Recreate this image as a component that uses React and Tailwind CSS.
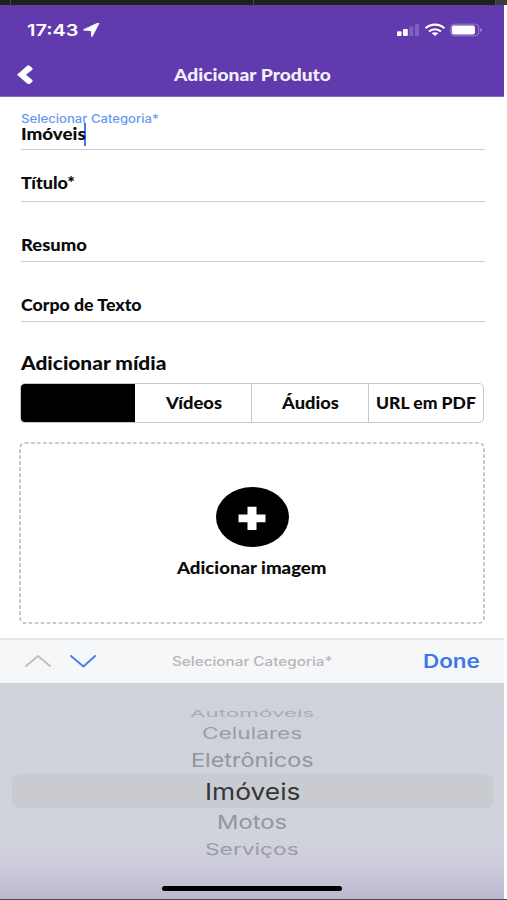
import { useLayoutEffect, useRef, useState } from "react";

// Text stretched horizontally so that it spans exactly `width` pixels.
function FitText({ width, className = "", children }) {
  const ref = useRef(null);
  const [scale, setScale] = useState(1);
  useLayoutEffect(() => {
    setScale(width / ref.current.offsetWidth);
  }, [width]);
  return (
    <span className={`flex shrink-0 whitespace-nowrap ${className}`} style={{ width }}>
      <span ref={ref} className="block shrink-0 origin-left" style={{ transform: `scaleX(${scale})` }}>
        {children}
      </span>
    </span>
  );
}

const display = "font-['Lato','Noto_Sans',sans-serif] font-black";
const system = "font-['Inter','Liberation_Sans',sans-serif]";

function StatusIcons() {
  return (
    <svg className="mt-[3px] h-4 w-[90px]" viewBox="0 0 90 16" fill="none">
      <g fill="#fff">
        <rect x="1" y="8.2" width="4.6" height="4.8" rx="1" />
        <rect x="7" y="6" width="4.800" height="7" rx="1" />
        <rect x="13.2" y="3.6" width="4" height="9.4" rx="1" opacity=".2" />
        <rect x="19" y="1.2" width="4" height="11.800" rx="1" opacity=".2" />
      </g>
      <g stroke="#fff" strokeWidth="2.2">
        <path d="M29.6 5.2C35 .4 43 .4 48.4 5.2" />
        <path d="M33 8.5c3.4-3 8.600-3 12 0" />
      </g>
      <path d="M35.700 10.300c1.800-1.500 4.800-1.500 6.600 0L39 13z" fill="#fff" />
      <rect x="54.700" y="1.200" width="28" height="11.600" rx="3.500" stroke="#fff" strokeOpacity=".35" />
      <rect x="55.800" y="2.500" width="23.200" height="9" rx="2" fill="#fff" />
      <path d="M84.200 5.200c2.200.5 2.200 3.100 0 3.600z" fill="#fff" fillOpacity=".45" />
    </svg>
  );
}

function Header() {
  return (
    <header className="h-[92px] shrink-0 border-b border-[#8568c4] bg-[#613bad] text-white">
      <div className="flex h-[48px] items-center justify-between pl-[27px] pr-[18px]">
        <div className="flex items-center gap-[5px] pt-[1px]">
          <FitText width={51} className={`${system} text-[16px] font-semibold leading-5`}>17:43</FitText>
          <svg className="h-[14px] w-[17px]" viewBox="0 0 17 14">
            <path d="M15.900.4 9.300 13.300q-.5.700-.8-.1L8.200 7.600 1 7.200q-1-.3 0-.8L14.900.1q1.200-.3 1 .3z" fill="#fff" stroke="#fff" strokeWidth=".8" />
          </svg>
        </div>
        <StatusIcons />
      </div>
      <div className="flex h-[43px] items-center pl-[17px]">
        <svg className="h-[20px] w-[17px]" viewBox="0 0 17 20">
          <path d="M0 9.700 10.500.6Q12 0 13 1l2.300 1.900q.9.900 0 1.800L9 9.700l6.300 5.200q.9 1 0 1.900L13 18.700q-1.200.8-2.500 0z" fill="#fff" />
        </svg>
        <FitText width={157} className={`${display} ml-[140px] text-[17px] leading-6 text-[#f3effa]`}>Adicionar Produto</FitText>
      </div>
    </header>
  );
}

function Field({ label, width, className }) {
  return (
    <div className={`flex items-end border-b border-[#cfcfcf] ${className}`}>
      <FitText width={width} className={`${display} text-[17px] leading-5`}>{label}</FitText>
    </div>
  );
}

function Form() {
  return (
    <main className="flex h-[541px] shrink-0 flex-col bg-white pl-[20.5px] pr-[19.5px] text-[#0b0b0b]">
      <div className="flex h-[53px] flex-col border-b border-[#cfcfcf] pt-[15px]">
        <FitText width={138} className={`${system} text-[11.500px] font-medium leading-[14px] text-[#6798ee]`}>Selecionar Categoria*</FitText>
        <div className="-mt-[3px] flex h-[23px] items-start">
          <FitText width={65} className={`${display} pt-[2px] text-[17px] leading-[18px]`}>Imóveis</FitText>
          <span className="-ml-[1.5px] h-[23px] w-[2px] bg-[#4475e0]" />
        </div>
      </div>
      <Field label="Título*" width={54} className="h-[52px] pb-[8px]" />
      <Field label="Resumo" width={66} className="h-[60px] pb-[6px]" />
      <Field label="Corpo de Texto" width={121} className="h-[60px] pb-[6px]" />
      <FitText width={145} className={`${display} mt-[29px] text-[19px] leading-6`}>Adicionar mídia</FitText>
      <div className={`${display} -ml-[0.5px] mr-[0.5px] mt-[8px] flex h-[40px] shrink-0 overflow-hidden rounded-[5px] border border-[#c9c9c9] text-[17px] leading-5`}>
        <div className="w-[114px] bg-black" />
        <div className="flex flex-1 items-center justify-center border-r border-[#c9c9c9] pl-[2px]"><FitText width={56}>Vídeos</FitText></div>
        <div className="flex flex-1 items-center justify-center border-r border-[#c9c9c9] pl-[1px]"><FitText width={57}>Áudios</FitText></div>
        <div className="flex flex-1 items-center justify-center"><FitText width={100}>URL em PDF</FitText></div>
      </div>
      <div className="relative -ml-[1.5px] -mr-[0.5px] mt-[19px] flex h-[182px] shrink-0 flex-col items-center pt-[45px]">
        <svg className="absolute inset-0 h-full w-full" fill="none">
          <rect x="1" y="1" width="464" height="180" rx="5" stroke="#b9b9b9" strokeWidth="1.600" strokeDasharray="3.600 2.400" />
        </svg>
        <div className="flex h-[60px] w-[73px] items-center justify-center rounded-[50%] bg-black">
          <svg className="mt-[2px] h-6 w-7" viewBox="0 0 28 24">
            <path d="M9.500.8h9v7.700h9v7.800h-9V24h-9v-7.700h-9V8.500h9z" fill="#fff" />
          </svg>
        </div>
        <FitText width={150} className={`${display} mt-[11px] text-[17px] leading-5`}>Adicionar imagem</FitText>
      </div>
    </main>
  );
}

function Toolbar() {
  return (
    <div className={`${system} flex h-[45px] shrink-0 items-center border-t-2 border-[#e4e5e6] bg-[#f6f7f8] pl-[25px]`}>
      <svg className="mb-[2px] h-4 w-[72px]" viewBox="0 0 72 16" fill="none" strokeWidth="1.800" strokeLinecap="round" strokeLinejoin="round">
        <path d="M1 13 13 3l12 10" stroke="#bcbcbe" />
        <path d="m46 3 12.500 10.500L70 3" stroke="#4380e8" strokeWidth="2" />
      </svg>
      <FitText width={160} className="ml-[75px] text-[12.500px] font-medium leading-5 text-[#b6b6b8]">Selecionar Categoria*</FitText>
      <FitText width={57} className="ml-[91px] pb-[1px] text-[18.500px] font-semibold leading-6 text-[#3b78e7]">Done</FitText>
    </div>
  );
}

function Picker() {
  return (
    <div className={`${system} flex flex-1 flex-col items-center bg-[linear-gradient(to_bottom,#d0d3d6_0%,#cfd2dc_14%,#d0d3da_50%,#d1d3dd_72%,#cdcbdc_85%,#bcb7ce_100%)] text-[#93959c]`}>
      <FitText width={125} className="mt-[26px] text-[9.500px] leading-[10px] text-[#a9abb2]">Automóveis</FitText>
      <FitText width={101} className="mt-[6px] text-[15.500px] leading-[18px] text-[#9b9da4]">Celulares</FitText>
      <FitText width={123} className="mt-[7px] text-[19px] leading-[22px]">Eletrônicos</FitText>
      <div className="mt-[2px] flex h-[34px] w-[481px] items-center justify-center rounded-[7px] bg-[#c9cbd0] pt-[1px] text-[#34363a]">
        <FitText width={95} className="text-[22.500px] leading-[28px]">Imóveis</FitText>
      </div>
      <FitText width={70} className="mt-[4px] text-[19px] leading-[22px]">Motos</FitText>
      <FitText width={94} className="mt-[7px] text-[15.500px] leading-[18px] text-[#9b9da4]">Serviços</FitText>
      <div className="mt-[27px] h-[5px] w-[180px] rounded-full bg-black" />
    </div>
  );
}

export default function App() {
  return (
    <div className="flex h-[900px] w-[507px] flex-col overflow-hidden bg-white">
      <div className="flex h-[5px] shrink-0 gap-px bg-[#4a4d4a]">
        <div className="w-[10px] bg-[#1e221f]" />
        <div className="w-[242px] bg-[#1e221f]" />
        <div className="w-[241px] bg-[#1e221f]" />
        <div className="flex-1 bg-[#3b3b3f]" />
      </div>
      <div className="flex w-[504px] flex-1 flex-col">
        <Header />
        <Form />
        <Toolbar />
        <Picker />
      </div>
      <div className="h-[1px] shrink-0 bg-[#4a4658]" />
    </div>
  );
}
